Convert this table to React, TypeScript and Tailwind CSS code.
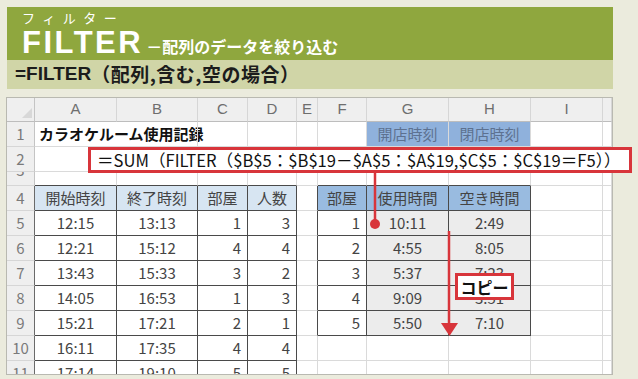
const colW = "grid-cols-[28px_82px_81px_50px_49px_21px_49px_82px_82px_72px_9px]";
const rowH = "grid-rows-[24px_25px_25px_14px_25px_25px_25px_25px_25px_25px_25px_13px]";

const letters = ["A", "B", "C", "D", "E", "F", "G", "H", "I", ""];

const data: Record<number, string[]> = {
  1: ["カラオケルーム使用記録", "", "", "", "", "", "開店時刻", "閉店時刻", "", ""],
  2: ["", "", "", "", "", "", "", "", "", ""],
  3: ["", "", "", "", "", "", "", "", "", ""],
  4: ["開始時刻", "終了時刻", "部屋", "人数", "", "部屋", "使用時間", "空き時間", "", ""],
  5: ["12:15", "13:13", "1", "3", "", "1", "10:11", "2:49", "", ""],
  6: ["12:21", "15:12", "4", "4", "", "2", "4:55", "8:05", "", ""],
  7: ["13:43", "15:33", "3", "2", "", "3", "5:37", "7:23", "", ""],
  8: ["14:05", "16:53", "1", "3", "", "4", "9:09", "3:51", "", ""],
  9: ["15:21", "17:21", "2", "1", "", "5", "5:50", "7:10", "", ""],
  10: ["16:11", "17:35", "4", "4", "", "", "", "", "", ""],
  11: ["17:14", "19:10", "5", "5", "", "", "", "", "", ""],
};

function borders(r: number, c: number) {
  const inA = r >= 4 && c >= 1 && c <= 4;
  const inF = r >= 4 && r <= 9 && c >= 6 && c <= 8;
  const rightDark = inA || inF || (c === 5 && r >= 4 && r <= 9);
  const bottomDark = inA || inF || (r === 3 && ((c >= 1 && c <= 4) || (c >= 6 && c <= 8)));
  let cls = "border-r " + (rightDark ? "border-r-[#4a4a4a]" : "border-r-[#dadada]");
  if (r === 1 && c === 1) cls = "";
  if (r !== 11) cls += " border-b " + (bottomDark ? "border-b-[#4a4a4a]" : "border-b-[#dadada]");
  return cls;
}

function fill(r: number, c: number) {
  if (r === 1 && (c === 7 || c === 8)) return "bg-[#8fb1dc] text-[#5d7190]";
  if (r === 4 && c >= 1 && c <= 4) return "bg-[#d7e5f2] text-[#444]";
  if (r === 4 && c >= 6 && c <= 8) return "bg-[#99bbe0] text-[#444]";
  if (r >= 5 && r <= 9 && (c === 7 || c === 8)) return "bg-[#ececec] text-[#444]";
  return "text-[#444]";
}

function align(r: number, c: number) {
  if (r === 1 && c === 1) return "justify-start pl-[4px] font-bold text-[#111] whitespace-nowrap";
  if (r === 1 || r === 4) return "justify-center";
  if (c === 3 || c === 4 || c === 6) return "justify-end pr-[6px]";
  return "justify-center";
}

function Cell({ r, c }: { r: number; c: number }) {
  const text = data[r][c - 1];
  return (
    <div className={`${borders(r, c)} ${fill(r, c)} ${r === 1 && c === 1 ? "overflow-visible" : "overflow-hidden"}`}>
      <div className={`h-[25px] flex items-center ${align(r, c)} ${r === 3 ? "-mt-[12px]" : ""}`}>
        {text}
      </div>
    </div>
  );
}

function RowHead({ r }: { r: number }) {
  return (
    <div
      className={`bg-[#efefef] text-[#7a7a7a] overflow-hidden border-r ${r >= 4 ? "border-r-[#6a6a6a]" : "border-r-[#c4c4c4]"} ${r !== 11 ? "border-b border-b-[#d6d6d6]" : ""}`}
    >
      <div className={`h-[25px] flex items-center justify-center ${r === 3 ? "-mt-[14px]" : ""}`}>{r}</div>
    </div>
  );
}

export default function App() {
  const rows = [1, 2, 3, 4, 5, 6, 7, 8, 9, 10, 11];
  return (
    <div className="relative w-[638px] h-[379px] overflow-hidden bg-[#ebebdd] font-['Liberation_Sans','Noto_Sans_CJK_JP',sans-serif]">
      {/* title band */}
      <div className="pt-[7px] pl-[7px]">
        <div className="w-[606px] h-[53px] bg-[#8fa73e] text-white pl-[15px] pt-[3px]">
          <div className="text-[13px] leading-[16px] tracking-[7.5px] font-['Noto_Sans_CJK_JP',sans-serif]">フィルター</div>
          <div className="flex items-baseline mt-[1px]">
            <span className="text-[31px] leading-[31px] font-bold tracking-[2.5px]">FILTER</span>
            <span className="ml-[3px] text-[16px] font-bold font-['Noto_Sans_CJK_JP',sans-serif]">－配列のデータを絞り込む</span>
          </div>
        </div>
        <div className="w-[606px] h-[29px] bg-[#d0d5a7] flex items-center pl-[8px] text-[19px] font-bold text-[#1c1c1c]">
          <span>=FILTER</span>
          <span className="font-['Noto_Sans_CJK_JP',sans-serif] tracking-[0.5px]">（配列,含む,空の場合）</span>
        </div>
      </div>

      {/* sheet */}
      <div
        className={`mt-[9px] ml-[7px] w-[605px] h-[276px] bg-white grid ${colW} ${rowH} overflow-hidden shadow-[0_0_0_1px_#b9b9b1] text-[15px] font-['Noto_Sans_CJK_JP',sans-serif]`}
      >
        <div className="bg-[#efefef] border-r border-r-[#c4c4c4] border-b border-b-[#bdbdbd] relative">
          <svg width="28" height="24" className="absolute inset-0">
            <polygon points="25,10 25,20 15,20" fill="#d8d8d8" />
          </svg>
        </div>
        {letters.map((l, i) => (
          <div
            key={i}
            className="bg-[#efefef] text-[#6e6e6e] flex items-center justify-center border-r border-r-[#d6d6d6] border-b border-b-[#bdbdbd] font-['Liberation_Sans',sans-serif]"
          >
            {l}
          </div>
        ))}
        {rows.map((r) => (
          <div key={r} className="contents">
            <RowHead r={r} />
            {[1, 2, 3, 4, 5, 6, 7, 8, 9, 10].map((c) => (
              <Cell key={c} r={r} c={c} />
            ))}
          </div>
        ))}
      </div>

      {/* callouts */}
      <svg width="638" height="379" className="absolute inset-0 pointer-events-none">
        <line x1="375" y1="171" x2="375" y2="224" stroke="#d8353b" strokeWidth="2.5" />
        <circle cx="375" cy="224" r="5" fill="#d8353b" />
        <line x1="449" y1="231" x2="449" y2="326" stroke="#d8353b" strokeWidth="2.5" />
        <polygon points="441,323 458,323 449.5,336" fill="#d8353b" />
      </svg>

      <div className="absolute left-[88px] top-[147px] w-[544px] h-[26px] bg-white border-[3px] border-[#d8353b] flex items-center pl-[6px] text-[16.6px] text-[#111] font-['Noto_Sans_CJK_JP',sans-serif] whitespace-nowrap">
        ＝SUM（FILTER（$B$5：$B$19－$A$5：$A$19,$C$5：$C$19＝F5））
      </div>

      <div className="absolute left-[455px] top-[273px] w-[59px] h-[27px] bg-white border-[3px] border-[#d8353b] flex items-center justify-center text-[16px] font-bold text-[#111] font-['Noto_Sans_CJK_JP',sans-serif]">
        コピー
      </div>
    </div>
  );
}
